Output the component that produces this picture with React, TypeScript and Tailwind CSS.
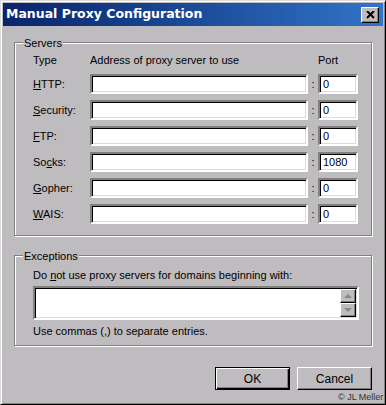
import React from 'react';

const rows = [
  { pre: '', key: 'H', post: 'TTP:', port: '0' },
  { pre: '', key: 'S', post: 'ecurity:', port: '0' },
  { pre: '', key: 'F', post: 'TP:', port: '0' },
  { pre: 'So', key: 'c', post: 'ks:', port: '1080' },
  { pre: '', key: 'G', post: 'opher:', port: '0' },
  { pre: '', key: 'W', post: 'AIS:', port: '0' },
];

// sunken win2k edit box
const field =
  'h-[20px] bg-white border-2 border-t-[#808080] border-l-[#808080] border-b-white border-r-white shadow-[inset_1px_1px_0_#000,inset_-1px_-1px_0_#dcdcdc]';

const Arrow = ({ up }: { up?: boolean }) => (
  <div className="w-[16px] h-[16px] flex items-center justify-center bg-[#bfbcbf] border border-t-white border-l-white border-b-[#000] border-r-[#000] shadow-[inset_-1px_-1px_0_#808080]">
    <svg width="8" height="5" viewBox="0 0 8 5">
      <polygon points={up ? '4,0 8,4 0,4' : '0,0 8,0 4,4'} fill="#8a878a" />
    </svg>
  </div>
);

const App = () => {
  return (
    <div
      className="relative w-[386px] h-[405px] bg-[#bfbcbf] border border-t-[#dcdcdc] border-l-[#dcdcdc] border-b-black border-r-black shadow-[inset_1px_1px_0_white,inset_-1px_-1px_0_#808080] p-[2px] text-[11px] text-black overflow-hidden"
      style={{ fontFamily: '"Liberation Sans", Arial, sans-serif' }}
    >
      {/* title bar */}
      <div className="h-[23px] bg-gradient-to-r from-[#0a246a] to-[#3274c8] flex items-center justify-between pl-[3px] pr-[4px]">
        <span
          className="text-white font-bold text-[12.5px]"
          style={{ fontFamily: '"DejaVu Sans", Verdana, sans-serif' }}
        >
          Manual Proxy Configuration
        </span>
        <div className="w-[18px] h-[16px] flex items-center justify-center bg-[#bfbcbf] border border-t-white border-l-white border-b-black border-r-black shadow-[inset_-1px_-1px_0_#808080]">
          <svg width="9" height="8" viewBox="0 0 9 8">
            <path d="M1 0 L8 7 M8 0 L1 7" stroke="#000" strokeWidth="2" />
          </svg>
        </div>
      </div>

      <div className="pl-[11px] pr-[11px]">
        {/* Servers */}
        <div className="relative mt-[16px] h-[194px] border border-[#808080] shadow-[inset_1px_1px_0_white,1px_1px_0_white] pl-[18px] pt-[10px]">
          <span className="absolute -top-[8px] left-[8px] px-[1px] bg-[#bfbcbf]">Servers</span>
          <div className="flex h-[14px] items-center">
            <span className="w-[57px]">Type</span>
            <span className="w-[228px]">Address of proxy server to use</span>
            <span>Port</span>
          </div>
          <div className="mt-[7px] flex flex-col gap-[6px]">
            {rows.map((r) => (
              <div key={r.post} className="flex items-center">
                <span className="w-[57px]">
                  {r.pre}
                  <span className="underline">{r.key}</span>
                  {r.post}
                </span>
                <div className={`${field} w-[218px]`} />
                <span className="w-[10px] text-center">:</span>
                <div className={`${field} w-[40px] pl-[3px] leading-[16px]`}>{r.port}</div>
              </div>
            ))}
          </div>
        </div>

        {/* Exceptions */}
        <div className="relative mt-[19px] h-[91px] border border-[#808080] shadow-[inset_1px_1px_0_white,1px_1px_0_white] pl-[18px] pt-[12px]">
          <span className="absolute -top-[8px] left-[8px] px-[1px] bg-[#bfbcbf]">Exceptions</span>
          <div className="h-[14px] leading-[14px]">
            Do <span className="underline">n</span>ot use proxy servers for domains beginning with:
          </div>
          <div className="mt-[4px] w-[326px] h-[34px] flex justify-end items-start bg-white border-2 border-t-[#808080] border-l-[#808080] border-b-white border-r-white shadow-[inset_1px_1px_0_#000,inset_-1px_-1px_0_#dcdcdc] p-[1px]">
            <div className="flex flex-col h-full justify-between">
              <Arrow up />
              <Arrow />
            </div>
          </div>
          <div className="mt-[4px] h-[14px] leading-[14px]">Use commas (,) to separate entries.</div>
        </div>

        {/* buttons */}
        <div className="mt-[21px] flex justify-end gap-[7px]">
          <button className="w-[75px] h-[23px] bg-[#bfbcbf] border border-black shadow-[inset_1px_1px_0_white,inset_-1px_-1px_0_#000,inset_-2px_-2px_0_#808080] text-[12px]">
            OK
          </button>
          <button className="w-[75px] h-[23px] bg-[#bfbcbf] border border-t-white border-l-white border-b-black border-r-black shadow-[inset_-1px_-1px_0_#808080] text-[12px]">
            Cancel
          </button>
        </div>
      </div>

      <span className="absolute left-[337px] top-[390px] text-[9px] whitespace-nowrap text-[#333]">© JL Meller</span>
    </div>
  );
};

export default App;
